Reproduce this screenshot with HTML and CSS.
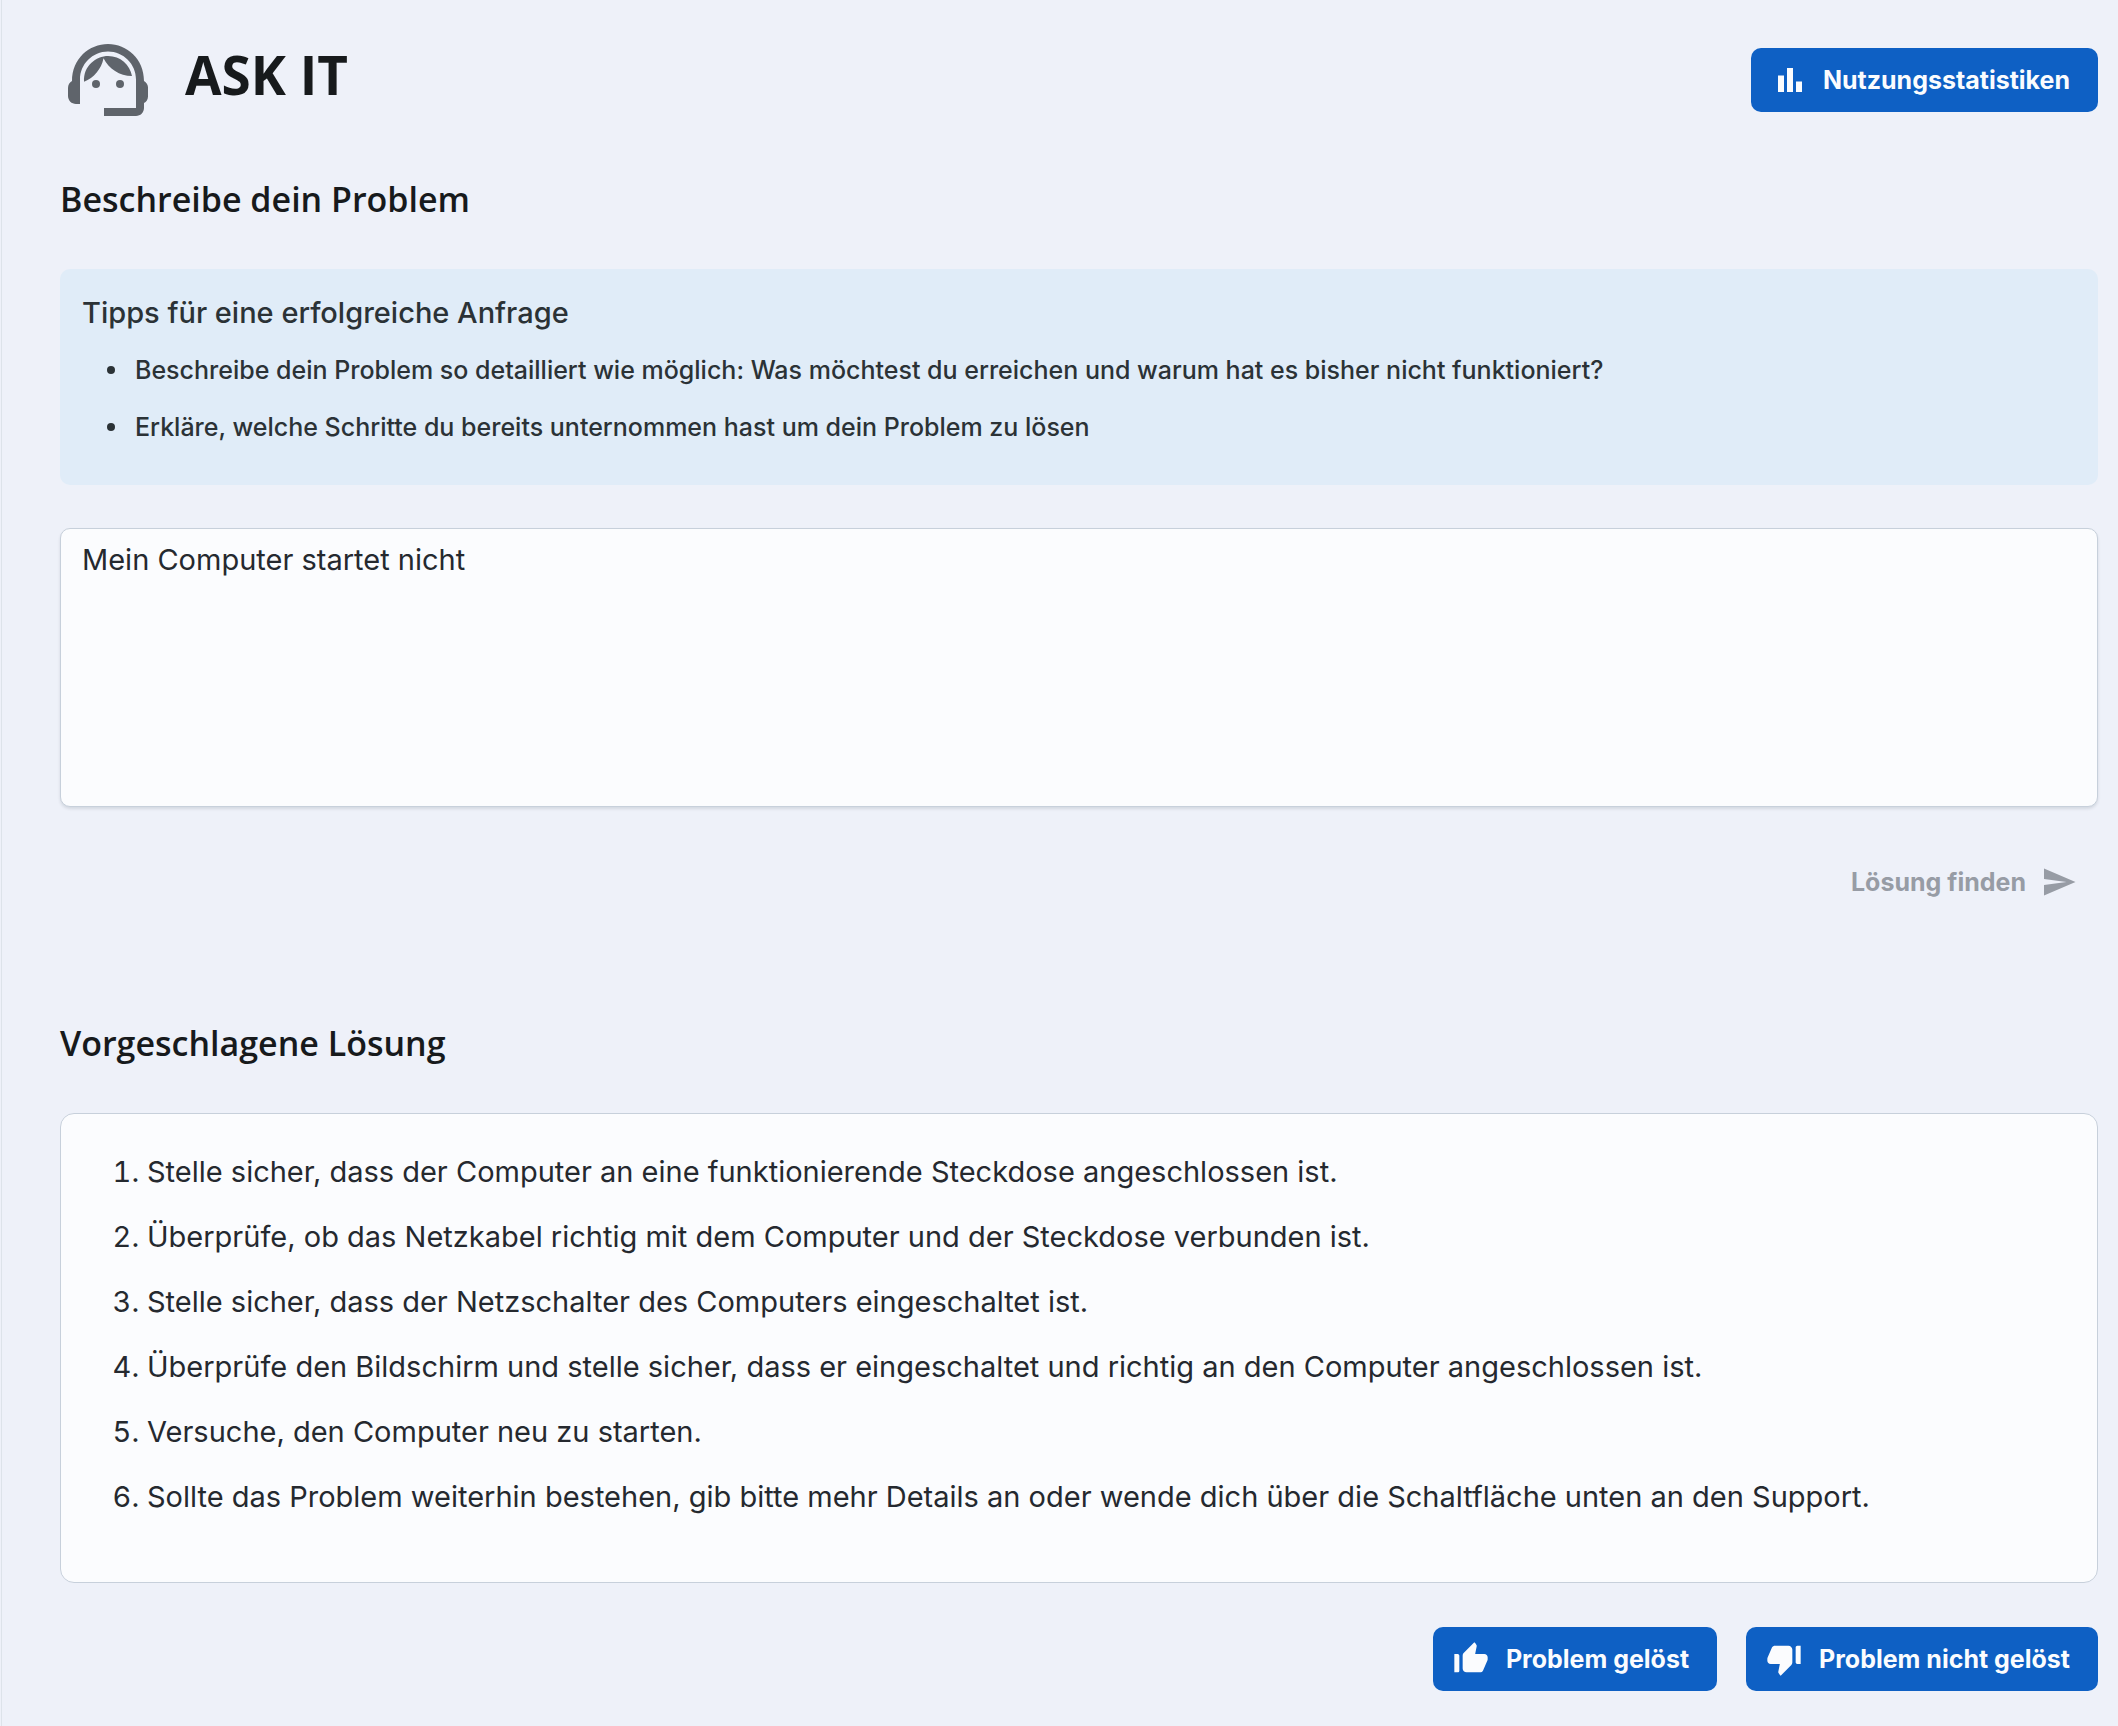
FILE: index.html
```
<!DOCTYPE html>
<html lang="de">
  <head>
    <meta charset="UTF-8" />
    <meta name="viewport" content="width=device-width, initial-scale=1.0" />
    <title>ASK IT</title>
    <link rel="stylesheet" href="styles.css">
  </head>
  <body>
    <main class="page">
      <header class="header">
        <div class="brand">
          <svg class="logo" viewBox="0 0 24 24" aria-hidden="true">
            <path d="M21 12.22C21 6.73 16.74 3 12 3c-4.69 0-9 3.65-9 9.28-.6.34-1 .98-1 1.72v2c0 1.1.9 2 2 2h1v-6.1c0-3.87 3.13-7 7-7s7 3.13 7 7V19h-8v2h8c1.1 0 2-.9 2-2v-1.22c.59-.31 1-.92 1-1.64v-2.3c0-.7-.41-1.31-1-1.62z" />
            <circle cx="9" cy="13" r="1" />
            <circle cx="15" cy="13" r="1" />
            <path d="M18 11.03C17.52 8.18 15.04 6 12.05 6c-3.03 0-6.29 2.51-6.03 6.45 2.47-1.01 4.33-3.21 4.86-5.89 1.31 2.63 4 4.44 7.12 4.47z" />
          </svg>
          <h1>ASK IT</h1>
        </div>
        <button type="button" class="btn">
          <svg class="icon" viewBox="0 0 24 24" aria-hidden="true">
            <path d="M4 9h4v11H4zm12 4h4v7h-4zm-6-9h4v16h-4z" />
          </svg>
          Nutzungsstatistiken
        </button>
      </header>

      <h2><label for="problem">Beschreibe dein Problem</label></h2>

      <section class="tips">
        <p class="tips-title">Tipps für eine erfolgreiche Anfrage</p>
        <ul>
          <li>Beschreibe dein Problem so detailliert wie möglich: Was möchtest du erreichen und warum hat es bisher nicht funktioniert?</li>
          <li>Erkläre, welche Schritte du bereits unternommen hast um dein Problem zu lösen</li>
        </ul>
      </section>

      <textarea id="problem" class="problem">Mein Computer startet nicht</textarea>

      <div class="actions">
        <button type="button" class="btn btn-plain" disabled>
          Lösung finden
          <svg class="icon" viewBox="0 0 24 24" aria-hidden="true">
            <path d="M2.01 21 23 12 2.01 3 2 10l15 2-15 2z" />
          </svg>
        </button>
      </div>

      <h2 class="solution-title">Vorgeschlagene Lösung</h2>

      <section class="solution">
        <ol>
          <li>Stelle sicher, dass der Computer an eine funktionierende Steckdose angeschlossen ist.</li>
          <li>Überprüfe, ob das Netzkabel richtig mit dem Computer und der Steckdose verbunden ist.</li>
          <li>Stelle sicher, dass der Netzschalter des Computers eingeschaltet ist.</li>
          <li>Überprüfe den Bildschirm und stelle sicher, dass er eingeschaltet und richtig an den Computer angeschlossen ist.</li>
          <li>Versuche, den Computer neu zu starten.</li>
          <li>Sollte das Problem weiterhin bestehen, gib bitte mehr Details an oder wende dich über die Schaltfläche unten an den Support.</li>
        </ol>
      </section>

      <div class="feedback">
        <button type="button" class="btn btn-feedback">
          <svg class="icon" viewBox="0 0 24 24" aria-hidden="true">
            <path d="M2 20h2c.55 0 1-.45 1-1v-9c0-.55-.45-1-1-1H2v11zm19.83-7.12c.11-.25.17-.52.17-.8V11c0-1.1-.9-2-2-2h-5.5l.92-4.65c.05-.22.02-.46-.08-.66-.23-.45-.52-.86-.88-1.22L14 2 7.59 8.41C7.21 8.79 7 9.3 7 9.83v7.84C7 18.95 8.05 20 9.34 20h8.11c.7 0 1.36-.37 1.72-.97l2.66-6.15z" />
          </svg>
          Problem gelöst
        </button>
        <button type="button" class="btn btn-feedback">
          <svg class="icon" viewBox="0 0 24 24" aria-hidden="true">
            <path d="M22 4h-2c-.55 0-1 .45-1 1v9c0 .55.45 1 1 1h2V4zM2.17 11.12c-.11.25-.17.52-.17.8V13c0 1.1.9 2 2 2h5.5l-.92 4.65c-.05.22-.02.46.08.66.23.45.52.86.88 1.22L10 22l6.41-6.41c.38-.38.59-.89.59-1.42V6.34C17 5.05 15.95 4 14.66 4h-8.1c-.71 0-1.36.37-1.72.97l-2.67 6.15z" />
          </svg>
          Problem nicht gelöst
        </button>
      </div>
    </main>
  </body>
</html>
```
FILE: styles.css
```
* {
  box-sizing: border-box;
}

body {
  margin: 0;
  min-height: 100vh;
  background-color: #eef1f9;
  color: #171a1c;
  font-family: Inter, "Liberation Sans", sans-serif;
  font-size: 29px;
}

.page {
  min-height: 100vh;
  margin-left: 1px;
  padding: 32px 20px 32px 58px;
  border-left: 1px solid #dde3ea;
}

.header {
  display: flex;
  justify-content: space-between;
  align-items: center;
}

.brand {
  display: flex;
  align-items: flex-start;
  gap: 29px;
}

.logo {
  width: 96px;
  height: 96px;
  fill: #5f646b;
}

h1,
h2 {
  margin: 0;
  font-family: "Open Sans", "Noto Sans", sans-serif;
}

h1 {
  font-size: 53px;
  line-height: 86px;
  font-weight: 700;
}

h2 {
  margin: 48px 0 47px;
  font-size: 34px;
  line-height: 46px;
  font-weight: 600;
}

.btn {
  display: flex;
  align-items: center;
  gap: 15px;
  height: 64px;
  padding: 0 28px 0 21px;
  border: none;
  border-radius: 10px;
  background-color: #0e60c4;
  color: #fbfcfe;
  font-family: inherit;
  font-size: 25px;
  font-weight: 700;
  cursor: pointer;
}

.btn:hover {
  background-color: #0a4fa3;
}

.icon {
  width: 36px;
  height: 36px;
  fill: currentColor;
}

/* Hinweisbox */
.tips {
  padding: 24px 22px 38px;
  border-radius: 10px;
  background-color: #e0ecf8;
  color: #2b3236;
  font-size: 25px;
  font-weight: 500;
}

.tips-title {
  margin: 0 0 17px;
  font-size: 29px;
  line-height: 40px;
}

.tips ul {
  display: grid;
  gap: 17px;
  margin: 0;
  padding-left: 25px;
  list-style: none;
}

.tips li {
  display: flex;
  align-items: center;
  gap: 20px;
  line-height: 40px;
}

.tips li::before {
  content: "";
  flex: none;
  width: 8px;
  height: 8px;
  border-radius: 50%;
  background-color: currentColor;
}

.problem {
  display: block;
  width: 100%;
  height: 279px;
  margin-top: 43px;
  padding: 10px 21px;
  border: 1px solid #c7d0db;
  border-radius: 10px;
  background-color: #fbfcfe;
  box-shadow: 0 2px 3px rgba(21, 40, 60, 0.12);
  color: #25292f;
  font-family: inherit;
  font-size: 29px;
  line-height: 42px;
  resize: none;
}

.actions {
  display: flex;
  justify-content: flex-end;
  margin-top: 43px;
}

.btn-plain,
.btn-plain:hover {
  padding: 0 21px;
  background-color: transparent;
  color: #979ca5;
  cursor: default;
}

.solution-title {
  margin-top: 106px;
}

.solution {
  padding: 37px 22px 64px;
  border: 1px solid #c7d0db;
  border-radius: 14px;
  background-color: #fbfcfe;
  color: #25292f;
}

.solution ol {
  display: grid;
  gap: 23px;
  margin: 0;
  padding-left: 64px;
}

.solution li {
  line-height: 42px;
}

.feedback {
  display: flex;
  justify-content: flex-end;
  gap: 29px;
  margin-top: 44px;
}

.btn-feedback {
  padding-left: 18px;
}

.btn-feedback .icon {
  width: 40px;
  height: 40px;
}
```
